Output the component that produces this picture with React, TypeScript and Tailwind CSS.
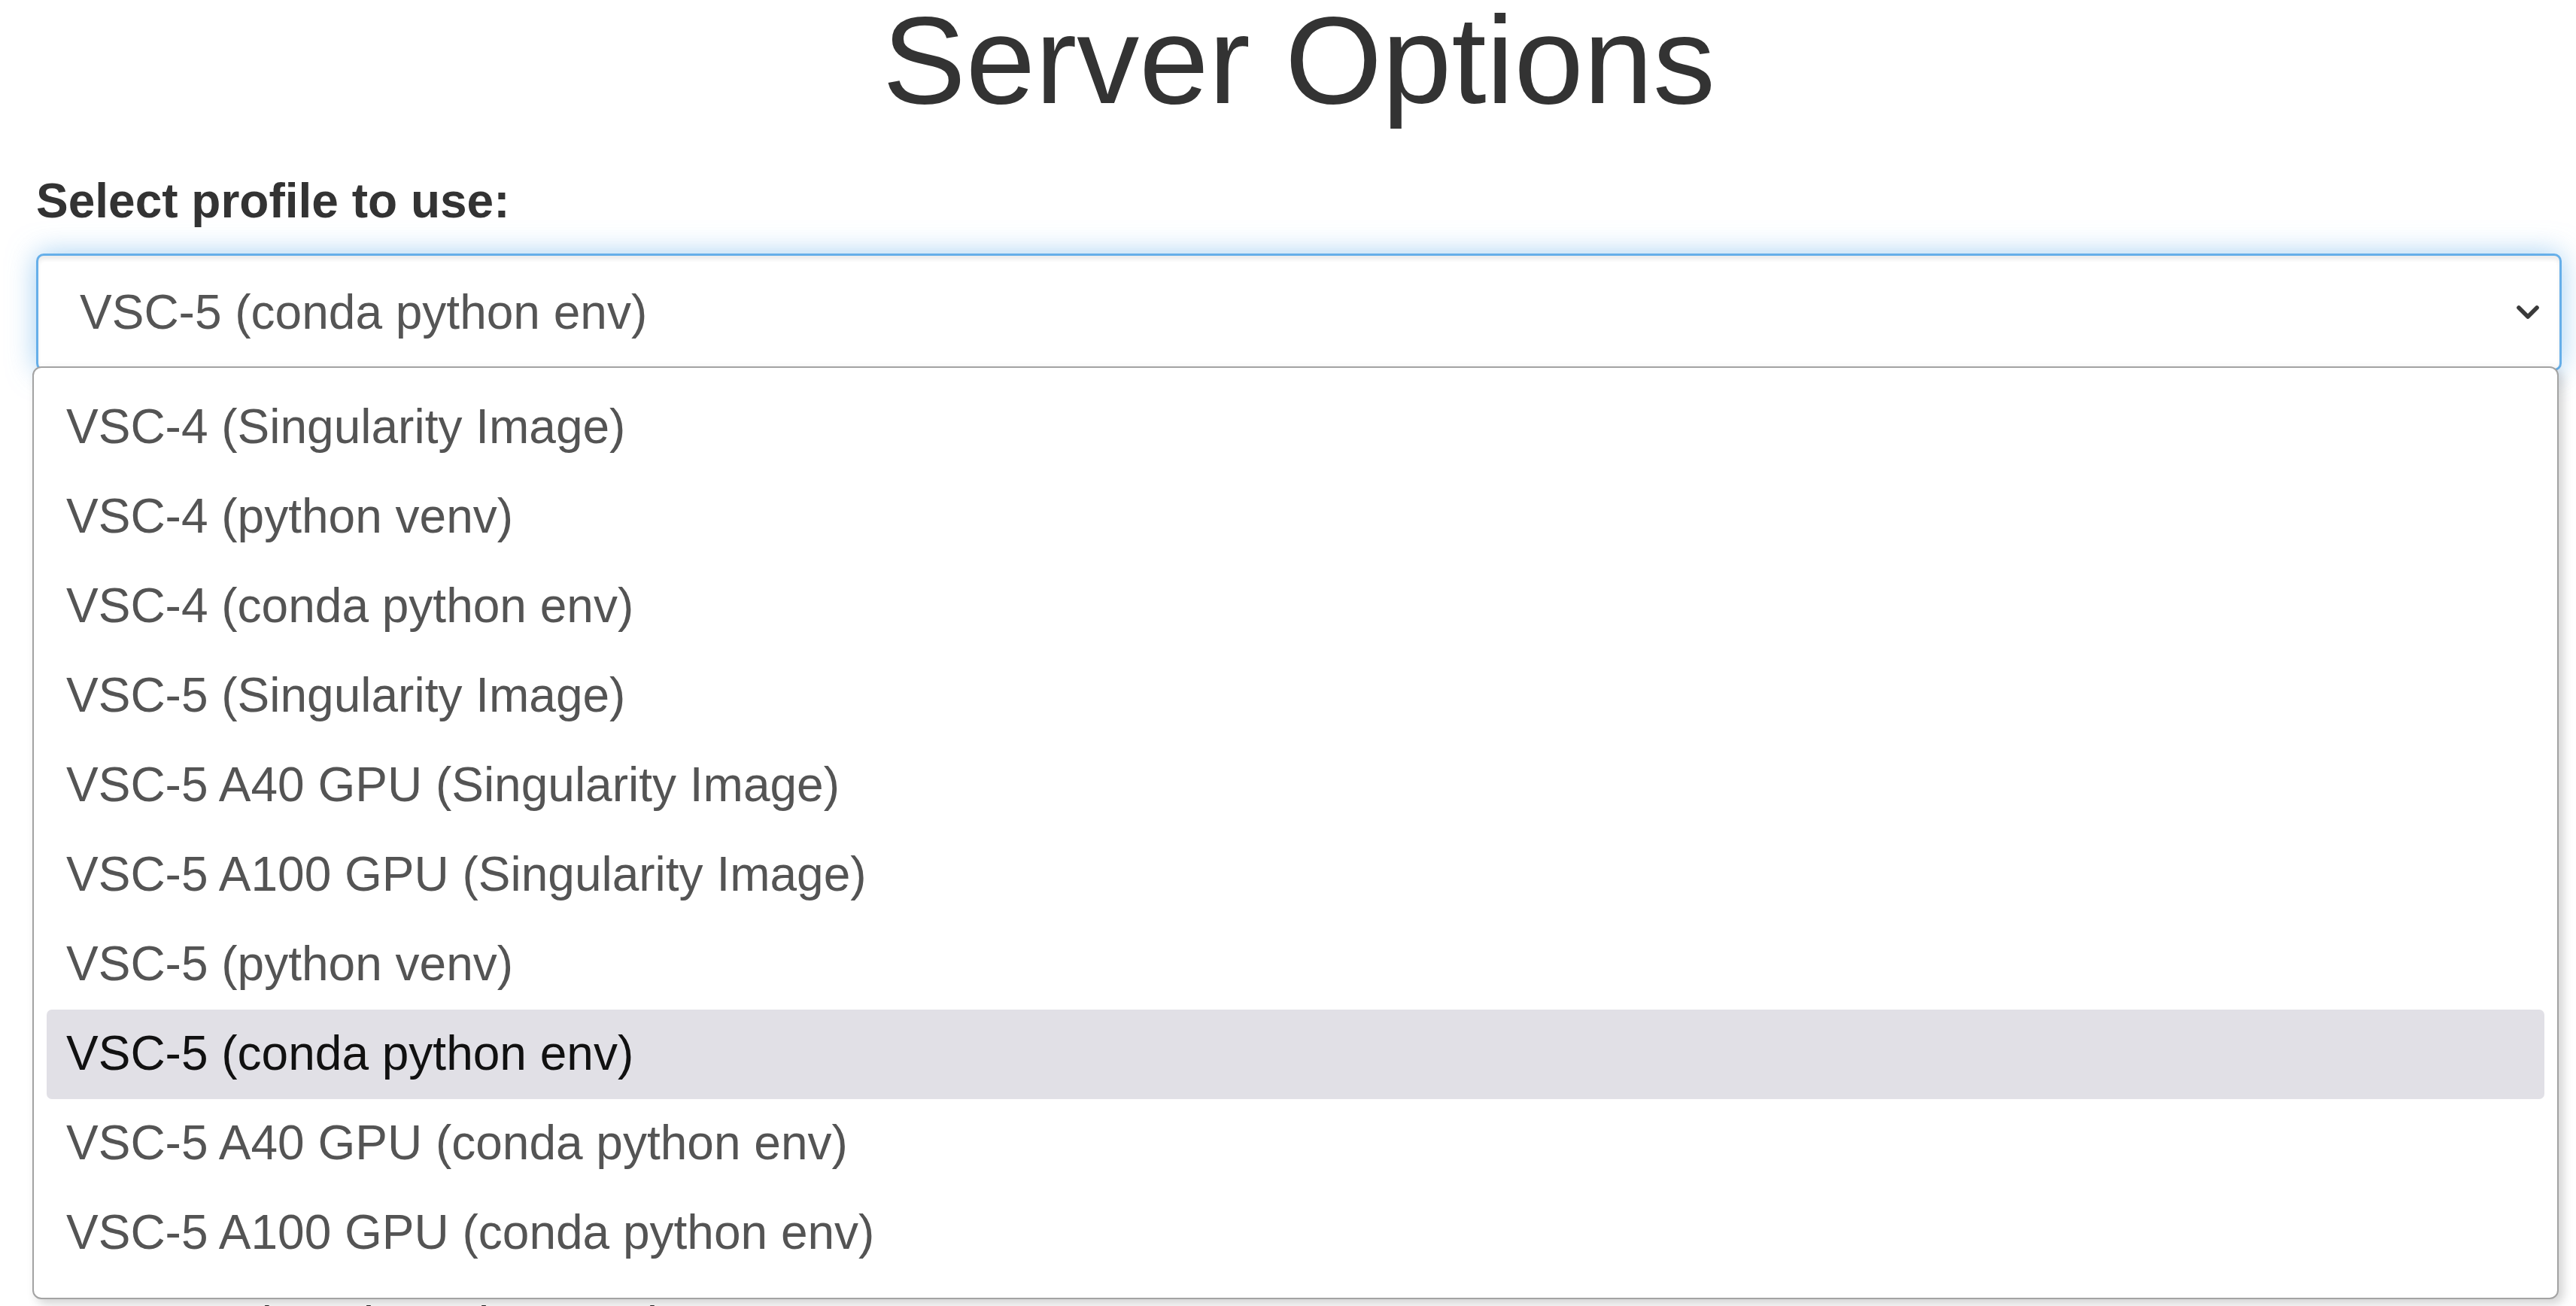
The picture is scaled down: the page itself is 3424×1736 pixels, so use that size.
import { ChevronDown } from "lucide-react";

const profiles = [
  "VSC-4 (Singularity Image)",
  "VSC-4 (python venv)",
  "VSC-4 (conda python env)",
  "VSC-5 (Singularity Image)",
  "VSC-5 A40 GPU (Singularity Image)",
  "VSC-5 A100 GPU (Singularity Image)",
  "VSC-5 (python venv)",
  "VSC-5 (conda python env)",
  "VSC-5 A40 GPU (conda python env)",
  "VSC-5 A100 GPU (conda python env)",
];

const selected = "VSC-5 (conda python env)";

export default function App() {
  return (
    <div className="h-[1736px] overflow-hidden bg-white font-['Liberation_Sans',Arial,sans-serif]">
      <div className="pl-[48px] pr-[19px]">
        <h1 className="text-center text-[166px] leading-[160px] font-normal text-[#333]">Server Options</h1>

        <label className="mt-[61px] block text-[64px] leading-[92px] font-bold text-[#333]">
          Select profile to use:
        </label>

        <div className="relative mt-[24px]">
          <div className="flex h-[156px] items-center justify-between rounded-[10px] border-[3px] border-[#66afe9] bg-white pl-[55px] pr-[18px] text-[64px] text-[#555] shadow-[inset_0_5px_5px_rgba(0,0,0,0.075),0_0_37px_rgba(102,175,233,0.6)]">
            <span>{selected}</span>
            <ChevronDown className="h-[48px] w-[48px] text-[#3a3a3a]" strokeWidth={2.8} />
          </div>

          {/* option popup of the select */}
          <div className="absolute top-[150px] left-[-5px] z-10 w-[3358px] rounded-[12px] border-2 border-[#a3a3a3] bg-white pt-[20px] pb-[26px] pl-[17px] pr-[17px] shadow-[6px_6px_14px_rgba(0,0,0,0.18)]">
            {profiles.map((p) => (
              <div
                key={p}
                className={
                  p === selected
                    ? "h-[119px] rounded-[7px] bg-[#e1e0e6] pl-[26px] text-[64px] leading-[117px] text-[#111]"
                    : "h-[119px] pl-[26px] text-[64px] leading-[117px] text-[#545454]"
                }
              >
                {p}
              </div>
            ))}
          </div>
        </div>

        <p className="mt-[1221px] pl-[40px] text-[64px] leading-[92px] text-[#222]">* VSC-5 (conda python env)</p>
      </div>
    </div>
  );
}
